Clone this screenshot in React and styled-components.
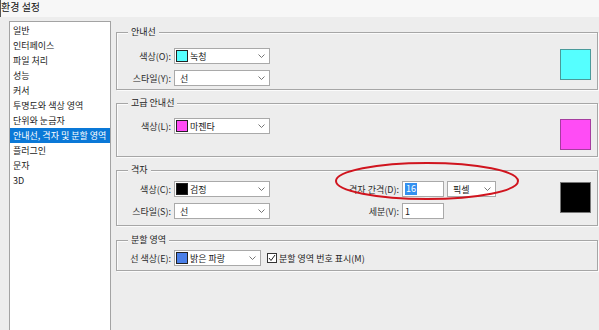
import React from 'react';
import styled, { createGlobalStyle } from 'styled-components';

const Global = createGlobalStyle`
  html, body { margin: 0; padding: 0; background: #ededed; }
  body {
    font-family: "Noto Sans CJK KR", "Noto Sans", sans-serif;
    font-size: 9px;
    color: #222;
  }
  * { box-sizing: border-box; }
`;

const Window = styled.div`
  position: relative;
  width: 599px;
  height: 330px;
  overflow: hidden;
  background: #ededed;
  display: flex;
  flex-direction: column;
`;

const TitleBar = styled.div`
  flex: none;
  height: 17px;
  background: #f7f7f7;
  border-left: 1px solid #555;
  font-size: 10px;
  line-height: 14px;
  color: #111;
  white-space: nowrap;
`;

const Body = styled.div`
  flex: 1;
  min-height: 0;
  display: flex;
  padding: 4px 1px 0 9px;
`;

const CategoryList = styled.ul`
  list-style: none;
  margin: 0;
  padding: 1px 0 0;
  width: 102px;
  flex: none;
  background: #fff;
  border: 1px solid #a3a3a3;
  border-bottom: none;
`;

const Category = styled.li`
  height: 15px;
  line-height: 15px;
  padding-left: 3px;
  white-space: nowrap;
  background: ${p => (p.$active ? '#0a78d7' : 'transparent')};
  color: ${p => (p.$active ? '#fff' : '#222')};
`;

const Panel = styled.div`
  flex: 1;
  display: flex;
  flex-direction: column;
  padding: 11px 0 0 5px;
`;

const Group = styled.section`
  position: relative;
  flex: none;
  height: ${p => p.$h}px;
  margin-bottom: ${p => p.$mb || 0}px;
  border: 1px solid #a6a6a6;
  box-shadow: inset 1px 1px 0 #fbfbfb, 1px 1px 0 #fbfbfb;
  padding: ${p => p.$pt}px 6px 0 0;
  display: flex;
  align-items: flex-start;
`;

const Legend = styled.span`
  position: absolute;
  top: -7px;
  left: 11px;
  padding: 0 3px;
  background: #ededed;
  line-height: 12px;
  white-space: nowrap;
`;

const FieldGrid = styled.div`
  display: grid;
  grid-template-columns: ${p => p.$label}px auto;
  column-gap: 3px;
  row-gap: 6px;
  align-items: center;
  margin-left: ${p => p.$ml || 0}px;
`;

const Label = styled.span`
  text-align: right;
  white-space: nowrap;
  color: #2a2a2a;
`;

const Line = styled.div`
  display: flex;
  align-items: center;
`;

const Combo = styled.div`
  width: ${p => p.$w}px;
  height: 16px;
  background: #fff;
  border: 1px solid #a9a9a9;
  display: flex;
  align-items: center;
  padding: 0 4px 0 ${p => (p.$plain ? 5 : 1)}px;
  margin-left: ${p => p.$ml || 0}px;
  white-space: nowrap;
`;

const ColorChip = styled.span`
  width: 12px;
  height: 12px;
  flex: none;
  background: ${p => p.$c};
  border: 1px solid #222;
  margin-right: 2px;
`;

const ComboText = styled.span`
  flex: 1;
  color: #222;
`;

const TextInput = styled.div`
  width: ${p => p.$w}px;
  height: 16px;
  background: #fff;
  border: 1px solid #a9a9a9;
  display: flex;
  align-items: center;
  padding-left: 2px;
`;

const Selected = styled.span`
  background: #3390f0;
  color: #fff;
  line-height: 12px;
  padding: 0 1px;
`;

const Swatch = styled.div`
  width: 31px;
  height: 31px;
  flex: none;
  margin-left: auto;
  margin-top: 1px;
  background: ${p => p.$c};
  border: 1px solid ${p => p.$b};
`;

const CheckRow = styled.label`
  display: flex;
  align-items: center;
  margin-left: 6px;
  gap: 2px;
  white-space: nowrap;
`;

const CheckBox = styled.span`
  width: 10px;
  height: 10px;
  border: 1px solid #333;
  background: #fff;
  display: flex;
  align-items: center;
  justify-content: center;
`;

const Annotation = styled.svg`
  position: absolute;
  left: 333px;
  top: 160px;
  pointer-events: none;
`;

const Chevron = () => (
  <svg width="7" height="4" viewBox="0 0 7 4" style={{ flex: 'none' }}>
    <polyline points="0.5,0.5 3.5,3.5 6.5,0.5" fill="none" stroke="#666" strokeWidth="0.9" />
  </svg>
);

const Select = ({ w, chip, text, ml }) => (
  <Combo $w={w} $plain={!chip} $ml={ml}>
    {chip && <ColorChip $c={chip} />}
    <ComboText>{text}</ComboText>
    <Chevron />
  </Combo>
);

const categories = [
  '일반',
  '인터페이스',
  '파일 처리',
  '성능',
  '커서',
  '투명도와 색상 영역',
  '단위와 눈금자',
  '안내선, 격자 및 분할 영역',
  '플러그인',
  '문자',
  '3D',
];

export default function App() {
  return (
    <>
      <Global />
      <Window>
        <TitleBar>환경 설정</TitleBar>
        <Body>
          <CategoryList>
            {categories.map((c, i) => (
              <Category key={c} $active={i === 7}>{c}</Category>
            ))}
          </CategoryList>
          <Panel>
            <Group $h={58} $mb={13} $pt={15}>
              <Legend>안내선</Legend>
              <FieldGrid $label={54}>
                <Label>색상(O):</Label>
                <Select w={96} chip="#55ffff" text="녹청" />
                <Label>스타일(Y):</Label>
                <Select w={96} text="선" />
              </FieldGrid>
              <Swatch $c="#55ffff" $b="#4a9a9a" />
            </Group>

            <Group $h={54} $mb={13} $pt={14}>
              <Legend>고급 안내선</Legend>
              <FieldGrid $label={54}>
                <Label>색상(L):</Label>
                <Select w={96} chip="#ff4cf5" text="마젠타" />
              </FieldGrid>
              <Swatch $c="#ff4cf5" $b="#a53d9f" />
            </Group>

            <Group $h={56} $mb={14} $pt={10}>
              <Legend>격자</Legend>
              <FieldGrid $label={54}>
                <Label>색상(C):</Label>
                <Select w={96} chip="#000" text="검정" />
                <Label>스타일(S):</Label>
                <Select w={96} text="선" />
              </FieldGrid>
              <FieldGrid $label={60} $ml={69}>
                <Label>격자 간격(D):</Label>
                <Line>
                  <TextInput $w={42}><Selected>16</Selected></TextInput>
                  <Select w={49} text="픽셀" ml={3} />
                </Line>
                <Label>세분(V):</Label>
                <TextInput $w={42}>1</TextInput>
              </FieldGrid>
              <Swatch $c="#000" $b="#777" />
            </Group>

            <Group $h={31} $pt={9}>
              <Legend>분할 영역</Legend>
              <FieldGrid $label={54}>
                <Label>선 색상(E):</Label>
                <Line>
                  <Select w={87} chip="#4a7fe8" text="밝은 파랑" />
                  <CheckRow>
                    <CheckBox>
                      <svg width="8" height="8" viewBox="0 0 8 8">
                        <polyline points="1,4 3,6.5 7,1" fill="none" stroke="#222" strokeWidth="1" />
                      </svg>
                    </CheckBox>
                    분할 영역 번호 표시(M)
                  </CheckRow>
                </Line>
              </FieldGrid>
            </Group>
          </Panel>
        </Body>
        <Annotation width="190" height="42" viewBox="0 0 190 42">
          <ellipse cx="94" cy="21" rx="91" ry="18" fill="none" stroke="#d0141e" strokeWidth="2" />
        </Annotation>
      </Window>
    </>
  );
}
